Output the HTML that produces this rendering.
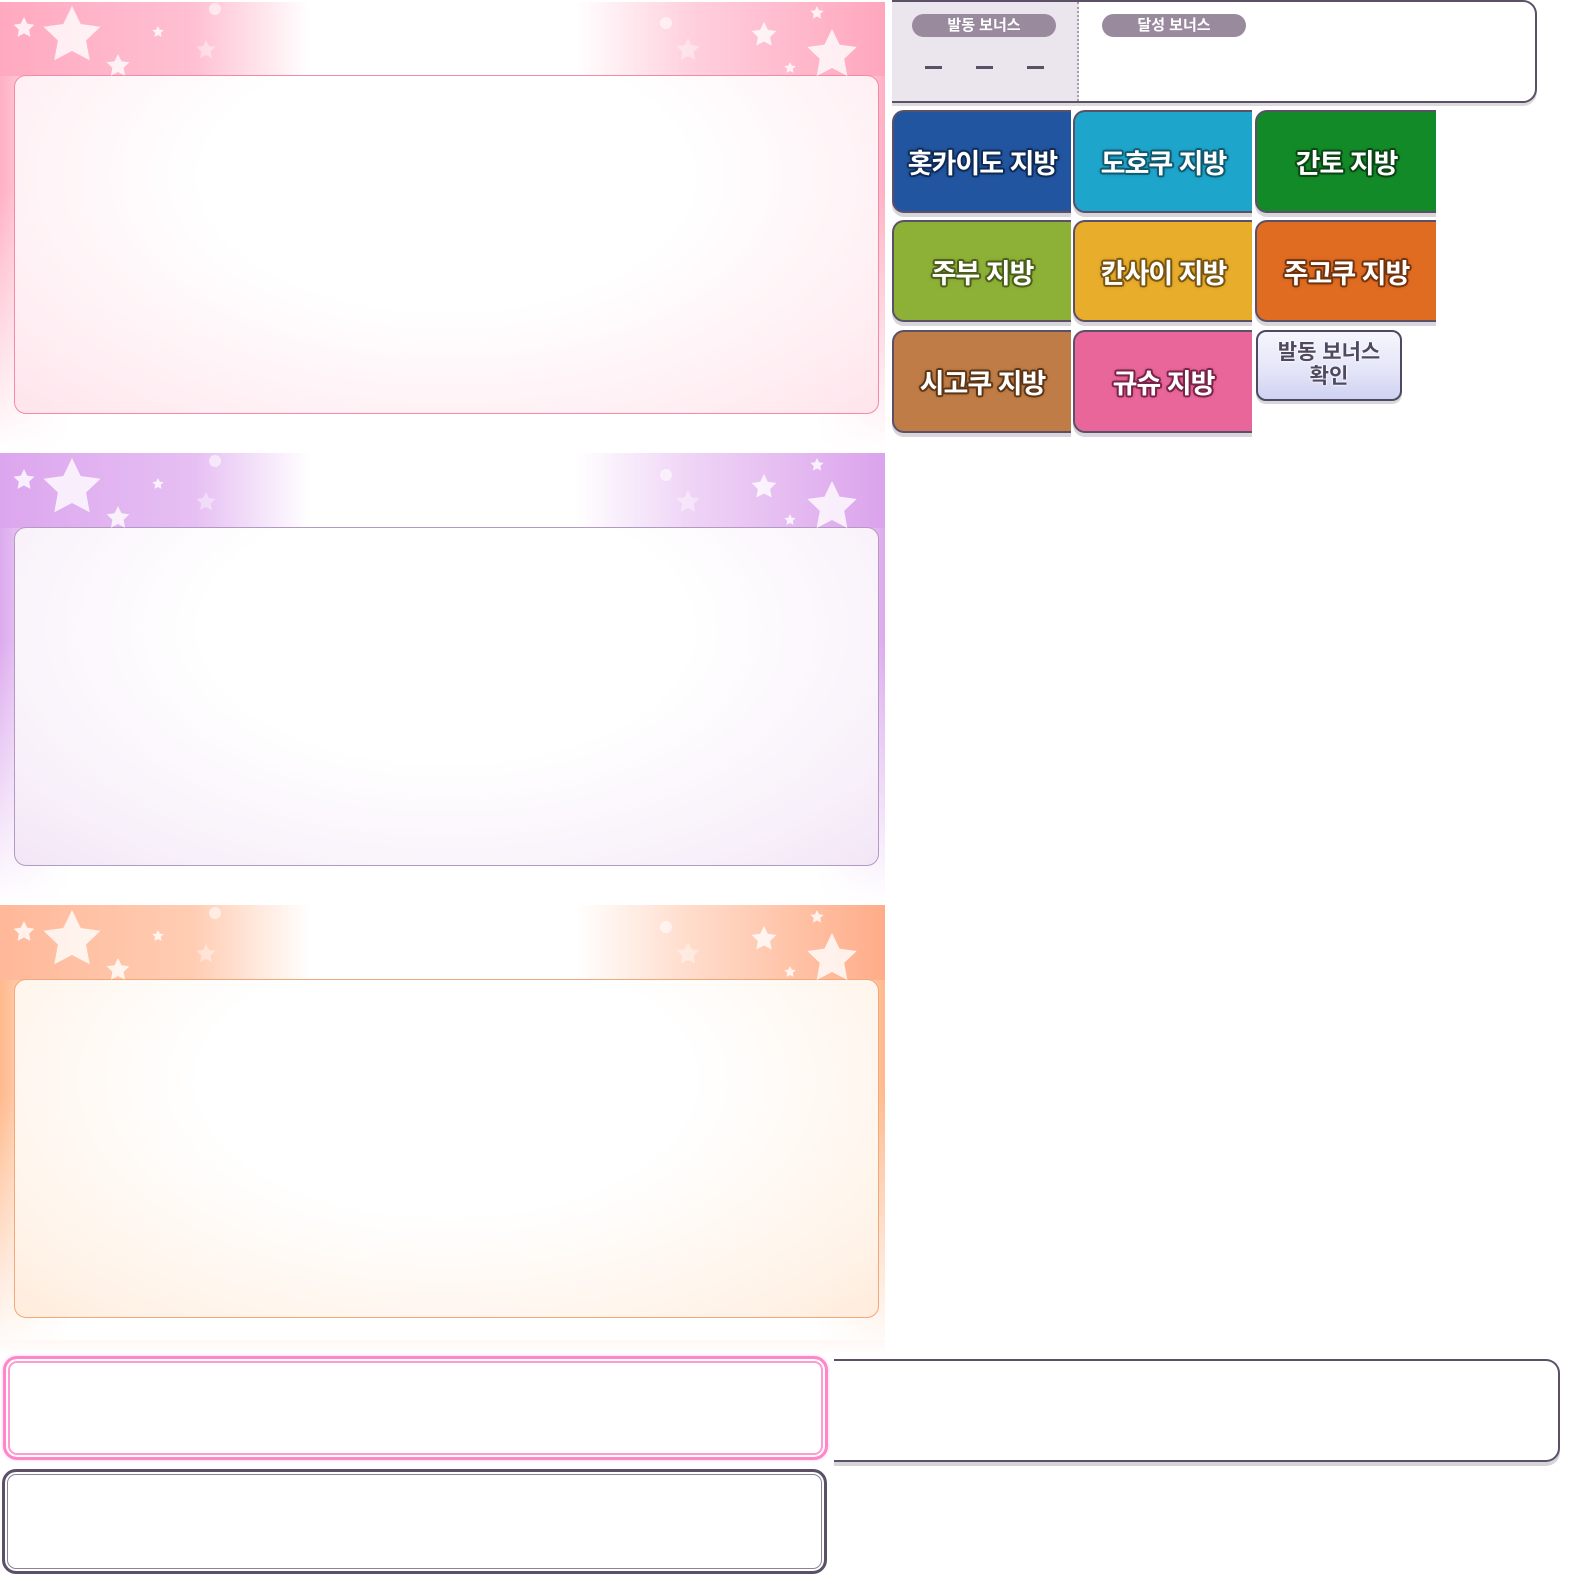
<!DOCTYPE html>
<html><head><meta charset="utf-8"><style>
*{margin:0;padding:0;box-sizing:border-box}
body{width:1577px;height:1577px;background:#fff;position:relative;overflow:hidden;font-family:"Liberation Sans","Noto Sans CJK KR","NanumGothic",sans-serif}
.panel{position:absolute;left:0;width:885px;height:452px}
.band{position:absolute;left:0;top:0;width:885px;height:76px}
.box{position:absolute;left:14px;top:75px;width:865px;height:339px;border-radius:12px;background:#fff}
.glow{position:absolute;left:0;top:76px;width:885px;height:376px;-webkit-mask-image:linear-gradient(180deg,#000 30%,transparent 100%);mask-image:linear-gradient(180deg,#000 30%,transparent 100%)}
.btn{position:absolute;border:2px solid #5b5068;border-right:none;border-radius:12px 0 0 12px;box-shadow:0 4px 0 #d8d6da;display:flex;align-items:center;justify-content:center;color:#fff;font-weight:bold;font-size:27px;letter-spacing:-1px;--c:#000;text-shadow:2px 0 0 var(--c),-2px 0 0 var(--c),0 2px 0 var(--c),0 -2px 0 var(--c),1.5px 1.5px 0 var(--c),-1.5px 1.5px 0 var(--c),1.5px -1.5px 0 var(--c),-1.5px -1.5px 0 var(--c),0 0 4px var(--c)}
.pill{position:absolute;top:14px;height:23px;width:144px;border-radius:12px;background:#9a8a9e;color:#fff;font-size:15px;font-weight:bold;text-align:center;line-height:23px}
.dash{position:absolute;top:66px;width:17px;height:3px;background:#5b5068}
</style></head><body>

<div class="panel" style="top:0">
 <div class="band" style="top:2px;background:linear-gradient(90deg,#ffa9c0 0%,#ffc0d2 22%,#fff 35%,#fff 65%,#ffd0de 78%,#ffa6bd 100%)"></div>
 <div class="glow" style="background:linear-gradient(90deg,#ffb0c4 0,#ffd6e1 4%,#fff 8%,#fff 92%,#ffd6e1 96%,#ffb0c4 100%)"></div>
 <div class="box" style="border:1.5px solid #f58aa6;background:radial-gradient(ellipse at 50% 30%,#fff 40%,#ffeef3 80%,#ffe4ec)"></div>
</div>
<div class="panel" style="top:452px">
 <div class="band" style="top:1px;background:linear-gradient(90deg,#dca6ee 0%,#e6bff3 22%,#fff 35%,#fff 65%,#efd4f6 78%,#dba3ec 100%)"></div>
 <div class="glow" style="background:linear-gradient(90deg,#dcaaee 0,#eed4f6 4%,#fff 8%,#fff 92%,#eed4f6 96%,#dcaaee 100%)"></div>
 <div class="box" style="border:1.5px solid #b39ac2;background:radial-gradient(ellipse at 50% 30%,#fff 40%,#f8f0fa 80%,#f2e6f6)"></div>
</div>
<div class="panel" style="top:904px">
 <div class="band" style="top:1px;background:linear-gradient(90deg,#ffb899 0%,#ffcdb3 22%,#fff 35%,#fff 65%,#ffdccb 78%,#ffac88 100%)"></div>
 <div class="glow" style="background:linear-gradient(90deg,#ffb98c 0,#ffdcc4 4%,#fff 8%,#fff 92%,#ffdcc4 96%,#ffb98c 100%)"></div>
 <div class="box" style="border:1.5px solid #f2a878;background:radial-gradient(ellipse at 50% 30%,#fff 40%,#fff4ea 80%,#ffecdc)"></div>
</div>

<svg width="885" height="1360" style="position:absolute;left:0;top:0" viewBox="0 0 885 1360">
 <defs><polygon id="s" points="0,-10 2.9,-4 9.5,-3.1 4.7,1.5 5.9,8.1 0,5 -5.9,8.1 -4.7,1.5 -9.5,-3.1 -2.9,-4"/></defs>
 <g fill="#fff" opacity=".8">
  <g id="st">
   <use href="#s" transform="translate(72,36) scale(3)"/>
   <use href="#s" transform="translate(24,28) scale(1.1)"/>
   <use href="#s" transform="translate(118,66) scale(1.2)"/>
   <use href="#s" transform="translate(158,32) scale(.6)"/>
   <use href="#s" transform="translate(206,50) scale(1)" opacity=".5"/>
   <use href="#s" transform="translate(764,35) scale(1.3)"/>
   <use href="#s" transform="translate(832,55) scale(2.6)"/>
   <use href="#s" transform="translate(817,13) scale(.7)"/>
   <use href="#s" transform="translate(790,68) scale(.6)"/>
   <use href="#s" transform="translate(688,50) scale(1.2)" opacity=".5"/>
   <circle cx="215" cy="9" r="6" opacity=".7"/>
   <circle cx="666" cy="23" r="6" opacity=".7"/>
  </g>
  <use href="#st" y="452"/>
  <use href="#st" y="904"/>
 </g>
</svg>

<div style="position:absolute;left:892px;top:0;width:645px;height:103px;border:2px solid #5b5068;border-left:none;border-radius:0 14px 14px 0;background:#fff;box-shadow:0 3px 0 #dcdadd"></div>
<div style="position:absolute;left:892px;top:2px;width:187px;height:99px;background:#ebe6ee;border-right:2px dotted #a69fae"></div>
<div class="pill" style="left:912px">발동 보너스</div>
<div class="pill" style="left:1102px">달성 보너스</div>
<div class="dash" style="left:925px"></div>
<div class="dash" style="left:976px"></div>
<div class="dash" style="left:1027px"></div>

<div class="btn" style="left:892px;top:110px;width:179px;height:103px;background:#2255a0;--c:#0e2a55">홋카이도 지방</div>
<div class="btn" style="left:1073px;top:110px;width:179px;height:103px;background:#1ea5cb;--c:#0f5a70">도호쿠 지방</div>
<div class="btn" style="left:1255px;top:110px;width:181px;height:103px;background:#138a28;--c:#0a4514">간토 지방</div>
<div class="btn" style="left:892px;top:220px;width:179px;height:102px;background:#8db136;--c:#4b5e1a">주부 지방</div>
<div class="btn" style="left:1073px;top:220px;width:179px;height:102px;background:#e8ad2a;--c:#7a5510">칸사이 지방</div>
<div class="btn" style="left:1255px;top:220px;width:181px;height:102px;background:#e06c22;--c:#73330c">주고쿠 지방</div>
<div class="btn" style="left:892px;top:330px;width:179px;height:103px;background:#bf7c46;--c:#5e3616">시고쿠 지방</div>
<div class="btn" style="left:1073px;top:330px;width:179px;height:103px;background:#e9669a;--c:#7a2247">규슈 지방</div>
<div style="position:absolute;left:1256px;top:330px;width:146px;height:71px;border:2.5px solid #4e4860;border-radius:10px;background:linear-gradient(180deg,#f6f6fd,#e3e4f8 60%,#cfd2f2);box-shadow:0 3px 0 #d8d6da;color:#4e4860;font-weight:bold;font-size:21px;line-height:24px;text-align:center;padding-top:9px;text-shadow:0 0 2px #fff,0 0 2px #fff">발동 보너스<br>확인</div>

<div style="position:absolute;left:0;top:1340px;width:885px;height:14px;background:linear-gradient(180deg,#fff7f4,#fff)"></div>
<div style="position:absolute;left:3px;top:1356px;width:825px;height:104px;border:3px solid #ff86c8;border-radius:14px;box-shadow:inset 0 0 0 2px #fff,inset 0 0 0 4px #ff9ad2,0 0 3px #ffc6e4;background:#fff"></div>
<div style="position:absolute;left:834px;top:1359px;width:726px;height:103px;border:2px solid #5b5068;border-left:none;border-radius:0 14px 14px 0;background:#fff;box-shadow:0 4px 0 #d6d4d6"></div>
<div style="position:absolute;left:2px;top:1469px;width:825px;height:105px;border:3px solid #5b5068;border-radius:14px;box-shadow:inset 0 0 0 2px #fff,inset 0 0 0 3px #8c8096;background:#fff"></div>
</body></html>
